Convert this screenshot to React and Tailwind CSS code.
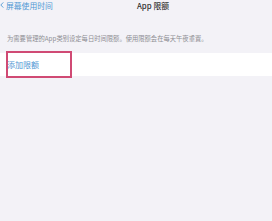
import React from 'react';

export default function App() {
  return (
    <div
      className="w-[272px] h-[221px] bg-[#f3f2f7] overflow-hidden"
      style={{ fontFamily: '"Noto Sans CJK SC", "Noto Sans", sans-serif' }}
    >
      {/* nav bar */}
      <div className="relative h-[11px] flex items-center">
        <div className="flex items-center text-[#4f98d4] text-[7.8px] leading-none">
          <svg width="4" height="6" viewBox="0 0 4 6" className="mr-[2px]">
            <path d="M3.3 0.4 L0.8 3 L3.3 5.6" fill="none" stroke="#4f98d4" strokeWidth="0.9" />
          </svg>
          <span>屏幕使用时间</span>
        </div>
        <div className="absolute left-0 right-0 top-0 h-[11px] flex items-center justify-center pointer-events-none">
          <span className="text-[7.8px] leading-none font-medium text-[#333] ml-[34px]">App 限额</span>
        </div>
      </div>

      {/* description */}
      <div className="pt-[25px] pl-[7px] text-[6.3px] leading-none text-[#8e8e93] whitespace-nowrap">
        为需要管理的App类别设定每日时间限额。使用限额会在每天午夜重置。
      </div>

      {/* row */}
      <div className="mt-[11px] h-[23px] bg-white relative flex items-center">
        <span className="pl-[7px] text-[8px] leading-none text-[#4f98d4]">添加限额</span>
        <div className="absolute left-[6px] top-[-2px] w-[66px] h-[27px] border-2 border-[#d04a74]" />
      </div>
    </div>
  );
}
